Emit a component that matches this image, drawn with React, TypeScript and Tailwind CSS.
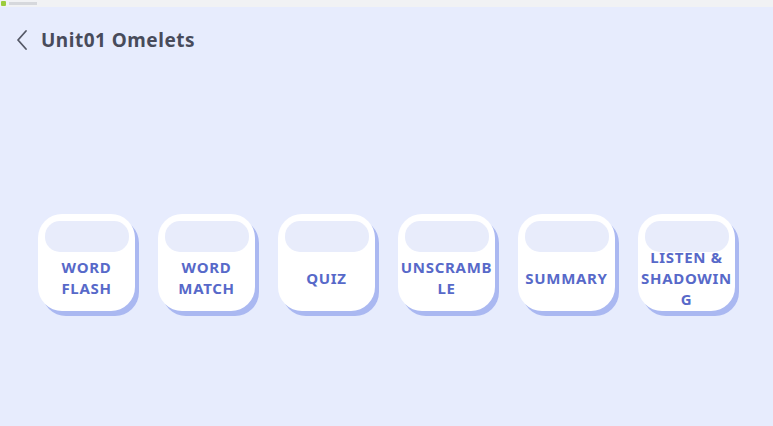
import React from 'react';

const activities = ['WORD FLASH', 'WORD MATCH', 'QUIZ', 'UNSCRAMBLE', 'SUMMARY', 'LISTEN & SHADOWING'];

const ActivityCard: React.FC<{ label: string }> = ({ label }) => (
  <button className="relative flex h-[97px] w-[97px] flex-col items-center rounded-[24px] bg-white pt-[7px] shadow-[4px_5px_0_0_#aab8f1]">
    <div className="h-[31px] w-[84px] shrink-0 rounded-[15px] bg-[#e8ecfb]" />
    <div className="flex min-h-0 flex-1 items-center justify-center pb-[6px]">
      <span className="w-[92px] text-center text-[15px] font-bold leading-[21px] tracking-[0.7px] text-[#5769c9] [overflow-wrap:anywhere]">
        {label}
      </span>
    </div>
  </button>
);

export default function App() {
  return (
    <div className="flex h-[426px] w-[773px] flex-col overflow-hidden bg-[#e7ecfd] font-['Noto_Sans',sans-serif]">
      <div className="flex h-[7px] items-center gap-[3px] bg-[#f1f2f4] px-[1px]">
        <div className="h-[5px] w-[5px] rounded-[1px] bg-[#9ccc3c]" />
        <div className="h-[3px] w-[28px] bg-[#d6d8dc]" />
      </div>
      <header className="flex items-center gap-[9px] pl-[14px] pt-[19px]">
        <svg width="18" height="22" viewBox="0 0 18 22" fill="none">
          <path d="M12 2 L4 11 L12 20" stroke="#555866" strokeWidth="1.8" strokeLinecap="round" strokeLinejoin="round" />
        </svg>
        <h1 className="text-[19px] font-bold tracking-[0.5px] text-[#484b5b]">Unit01 Omelets</h1>
      </header>
      <main className="flex gap-[23px] pl-[38px] pt-[159px]">
        {activities.map(a => (
          <ActivityCard key={a} label={a} />
        ))}
      </main>
    </div>
  );
}
